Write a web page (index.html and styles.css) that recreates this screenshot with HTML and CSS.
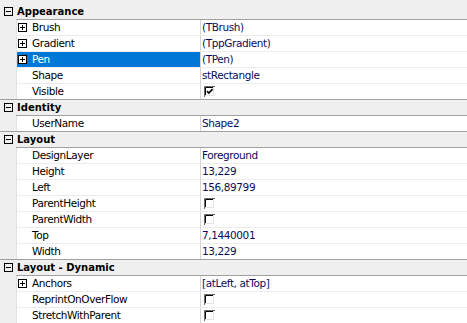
FILE: index.html
```html
<!DOCTYPE html>
<html>
<head>
<meta charset="utf-8">
<link rel="stylesheet" href="styles.css">
</head>
<body>
<div class="grid">
  <div class="cat first"><span class="exp"><svg class="box" width="9" height="9" viewBox="0 0 9 9"><rect x="0.5" y="0.5" width="8" height="8" fill="none" stroke="#000"/><path d="M2 4.5H7" stroke="#000"/></svg></span><span class="title">Appearance</span></div>
  <div class="row"><span class="gut"></span><span class="name"><span class="ico"><svg width="9" height="9" viewBox="0 0 9 9"><rect x="0.5" y="0.5" width="8" height="8" fill="#fff" stroke="#000"/><path d="M2 4.5H7M4.5 2V7" stroke="#000"/></svg></span>Brush</span><span class="val">(TBrush)</span></div>
  <div class="row"><span class="gut"></span><span class="name"><span class="ico"><svg width="9" height="9" viewBox="0 0 9 9"><rect x="0.5" y="0.5" width="8" height="8" fill="#fff" stroke="#000"/><path d="M2 4.5H7M4.5 2V7" stroke="#000"/></svg></span>Gradient</span><span class="val">(TppGradient)</span></div>
  <div class="row"><span class="gut"></span><span class="name sel"><span class="ico"><svg width="9" height="9" viewBox="0 0 9 9"><rect x="0.5" y="0.5" width="8" height="8" fill="#fff" stroke="#000"/><path d="M2 4.5H7M4.5 2V7" stroke="#000"/></svg></span>Pen</span><span class="val">(TPen)</span></div>
  <div class="row"><span class="gut"></span><span class="name"><span class="ico"></span>Shape</span><span class="val">stRectangle</span></div>
  <div class="row last"><span class="gut"></span><span class="name"><span class="ico"></span>Visible</span><span class="val"><svg class="chk" width="11" height="11" viewBox="0 0 11 11"><rect x="0" y="0" width="11" height="11" fill="#fff"/><path d="M0.5 11V0.5H11" fill="none" stroke="#6a6a6a"/><path d="M1.5 10V1.5H10" fill="none" stroke="#000"/><path d="M1 9.5H9.5V1" fill="none" stroke="#e3e3e3"/><path d="M3 5.2L4.8 7L8.6 3.2" fill="none" stroke="#000" stroke-width="1.7"/></svg></span></div>

  <div class="cat"><span class="exp"><svg class="box" width="9" height="9" viewBox="0 0 9 9"><rect x="0.5" y="0.5" width="8" height="8" fill="none" stroke="#000"/><path d="M2 4.5H7" stroke="#000"/></svg></span><span class="title">Identity</span></div>
  <div class="row last"><span class="gut"></span><span class="name"><span class="ico"></span>UserName</span><span class="val">Shape2</span></div>

  <div class="cat"><span class="exp"><svg class="box" width="9" height="9" viewBox="0 0 9 9"><rect x="0.5" y="0.5" width="8" height="8" fill="none" stroke="#000"/><path d="M2 4.5H7" stroke="#000"/></svg></span><span class="title">Layout</span></div>
  <div class="row"><span class="gut"></span><span class="name"><span class="ico"></span>DesignLayer</span><span class="val">Foreground</span></div>
  <div class="row"><span class="gut"></span><span class="name"><span class="ico"></span>Height</span><span class="val">13,229</span></div>
  <div class="row"><span class="gut"></span><span class="name"><span class="ico"></span>Left</span><span class="val">156,89799</span></div>
  <div class="row"><span class="gut"></span><span class="name"><span class="ico"></span>ParentHeight</span><span class="val"><svg class="chk" width="11" height="11" viewBox="0 0 11 11"><rect x="0" y="0" width="11" height="11" fill="#fff"/><path d="M0.5 11V0.5H11" fill="none" stroke="#6a6a6a"/><path d="M1.5 10V1.5H10" fill="none" stroke="#000"/><path d="M1 9.5H9.5V1" fill="none" stroke="#e3e3e3"/></svg></span></div>
  <div class="row"><span class="gut"></span><span class="name"><span class="ico"></span>ParentWidth</span><span class="val"><svg class="chk" width="11" height="11" viewBox="0 0 11 11"><rect x="0" y="0" width="11" height="11" fill="#fff"/><path d="M0.5 11V0.5H11" fill="none" stroke="#6a6a6a"/><path d="M1.5 10V1.5H10" fill="none" stroke="#000"/><path d="M1 9.5H9.5V1" fill="none" stroke="#e3e3e3"/></svg></span></div>
  <div class="row"><span class="gut"></span><span class="name"><span class="ico"></span>Top</span><span class="val">7,1440001</span></div>
  <div class="row last"><span class="gut"></span><span class="name"><span class="ico"></span>Width</span><span class="val">13,229</span></div>

  <div class="cat"><span class="exp"><svg class="box" width="9" height="9" viewBox="0 0 9 9"><rect x="0.5" y="0.5" width="8" height="8" fill="none" stroke="#000"/><path d="M2 4.5H7" stroke="#000"/></svg></span><span class="title">Layout - Dynamic</span></div>
  <div class="row"><span class="gut"></span><span class="name"><span class="ico"><svg width="9" height="9" viewBox="0 0 9 9"><rect x="0.5" y="0.5" width="8" height="8" fill="#fff" stroke="#000"/><path d="M2 4.5H7M4.5 2V7" stroke="#000"/></svg></span>Anchors</span><span class="val">[atLeft, atTop]</span></div>
  <div class="row"><span class="gut"></span><span class="name"><span class="ico"></span>ReprintOnOverFlow</span><span class="val"><svg class="chk" width="11" height="11" viewBox="0 0 11 11"><rect x="0" y="0" width="11" height="11" fill="#fff"/><path d="M0.5 11V0.5H11" fill="none" stroke="#6a6a6a"/><path d="M1.5 10V1.5H10" fill="none" stroke="#000"/><path d="M1 9.5H9.5V1" fill="none" stroke="#e3e3e3"/></svg></span></div>
  <div class="row"><span class="gut"></span><span class="name"><span class="ico"></span>StretchWithParent</span><span class="val"><svg class="chk" width="11" height="11" viewBox="0 0 11 11"><rect x="0" y="0" width="11" height="11" fill="#fff"/><path d="M0.5 11V0.5H11" fill="none" stroke="#6a6a6a"/><path d="M1.5 10V1.5H10" fill="none" stroke="#000"/><path d="M1 9.5H9.5V1" fill="none" stroke="#e3e3e3"/></svg></span></div>
</div>
</body>
</html>
```
FILE: styles.css
```css
html, body {
  margin: 0;
  padding: 0;
  background: #f0f0f0;
}
.grid {
  width: 467px;
  padding-top: 4px;
  background: #f0f0f0;
  font-family: "DejaVu Sans", sans-serif;
  font-size: 10.5px;
  line-height: 15px;
  color: #000;
}
.cat {
  display: flex;
  height: 16px;
}
.cat .exp {
  width: 16px;
  flex: none;
  display: flex;
  align-items: center;
  padding-left: 4px;
  box-sizing: border-box;
  height: 15px;
}
.box { display: block; }
.cat .title {
  flex: 1;
  padding-left: 1px;
  font-size: 10px;
  font-weight: bold;
  border-bottom: 1px solid #a0a0a0;
}
.row {
  display: flex;
  height: 16px;
  box-sizing: border-box;
}
.row.last {
  border-bottom: 1px solid #a0a0a0;
}
.gut {
  width: 16px;
  flex: none;
}
.name {
  width: 185px;
  flex: none;
  box-sizing: border-box;
  display: flex;
  align-items: center;
  padding-left: 1px;
  background: #fff;
  border-left: 1px solid #e2e2e2;
  border-right: 1px solid #d6d6d6;
  border-bottom: 1px solid #ececec;
  letter-spacing: -0.4px;
  white-space: nowrap;
}
.name.sel {
  background: #0078d7;
  color: #fff;
}
.ico {
  width: 14px;
  flex: none;
  display: flex;
  align-items: center;
}
.ico svg { display: block; }
.val {
  flex: 1;
  background: #fff;
  padding-left: 1px;
  border-bottom: 1px solid #ececec;
  color: #0c0c5c;
  letter-spacing: -0.4px;
  white-space: nowrap;
  display: flex;
  align-items: flex-start;
}
.row.last .name,
.row.last .val {
  border-bottom: none;
}
.chk {
  display: block;
  margin-left: 2px;
  margin-top: 2px;
}
```
